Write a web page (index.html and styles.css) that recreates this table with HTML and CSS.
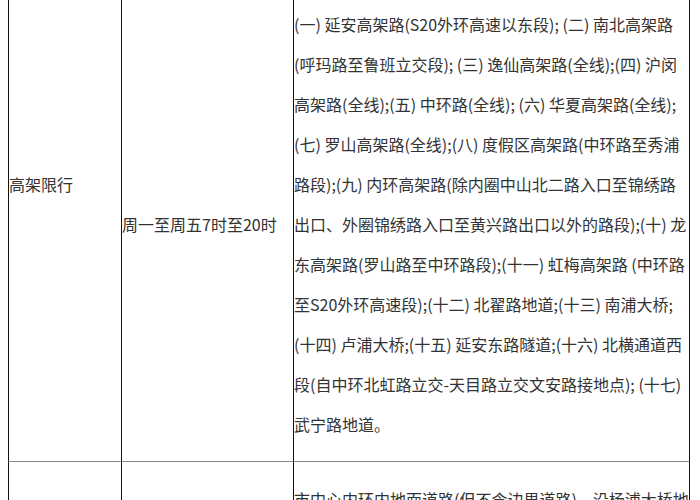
FILE: index.html
```html
<!DOCTYPE html>
<html lang="zh-CN">
<head>
<meta charset="utf-8">
<title>高架限行</title>
<link rel="stylesheet" href="styles.css">
</head>
<body>
<table class="rules">
  <tbody>
    <tr class="row">
      <td class="cell c1"><span class="label">高架限行</span></td>
      <td class="cell c2">周一至周五7时至20时</td>
      <td class="cell c3">(一) 延安高架路(S20外环高速以东段); (二) 南北高架路(呼玛路至鲁班立交段); (三) 逸仙高架路(全线);(四) 沪闵高架路(全线);(五) 中环路(全线); (六) 华夏高架路(全线); (七) 罗山高架路(全线);(八) 度假区高架路(中环路至秀浦路段);(九) 内环高架路(除内圈中山北二路入口至锦绣路出口、外圈锦绣路入口至黄兴路出口以外的路段);(十) 龙东高架路(罗山路至中环路段);(十一) 虹梅高架路 (中环路至S20外环高速段);(十二) 北翟路地道;(十三) 南浦大桥;(十四) 卢浦大桥;(十五) 延安东路隧道;(十六) 北横通道西段(自中环北虹路立交-天目路立交文安路接地点); (十七) 武宁路地道。</td>
    </tr>
    <tr class="row">
      <td class="cell c1"><span class="label">地面限行</span></td>
      <td class="cell c2">周一至周五7时至9时、17时至19时</td>
      <td class="cell c3">市中心内环内地面道路(但不含边界道路)、沿杨浦大桥地面道路、南浦大桥地面道路、卢浦大桥地面道路，以及延安东路隧道、打浦路隧道、复兴东路隧道、大连路隧道、新建路隧道、人民路隧道、翔殷路隧道、外滩隧道、军工路隧道、长江路隧道等越江隧道及其连接道路。</td>
    </tr>
  </tbody>
</table>
</body>
</html>
```

FILE: styles.css
```css
html, body {
  margin: 0;
  padding: 0;
  background: #ffffff;
}
body {
  padding: 0 8px;
  font-family: "Microsoft YaHei", "Noto Sans CJK SC", "Noto Sans", sans-serif;
  font-size: 16px;
  color: #333333;
}
.rules {
  border-collapse: separate;
  border-spacing: 0;
  table-layout: fixed;
  width: 682px;
  margin-top: -13px;
}
.cell {
  box-sizing: border-box;
  border-left: 1px solid #111111;
  border-bottom: 1px solid #8a8a8a;
  padding: 17px 0;
  line-height: 40px;
  vertical-align: middle;
  text-align: left;
  word-break: break-all;
}
.c1 { width: 113px; }
.c2 { width: 172px; }
.c3 {
  width: 397px;
  border-right: 1px solid #111111;
}
.label {
  display: block;
  padding-bottom: 80px;
}
```
